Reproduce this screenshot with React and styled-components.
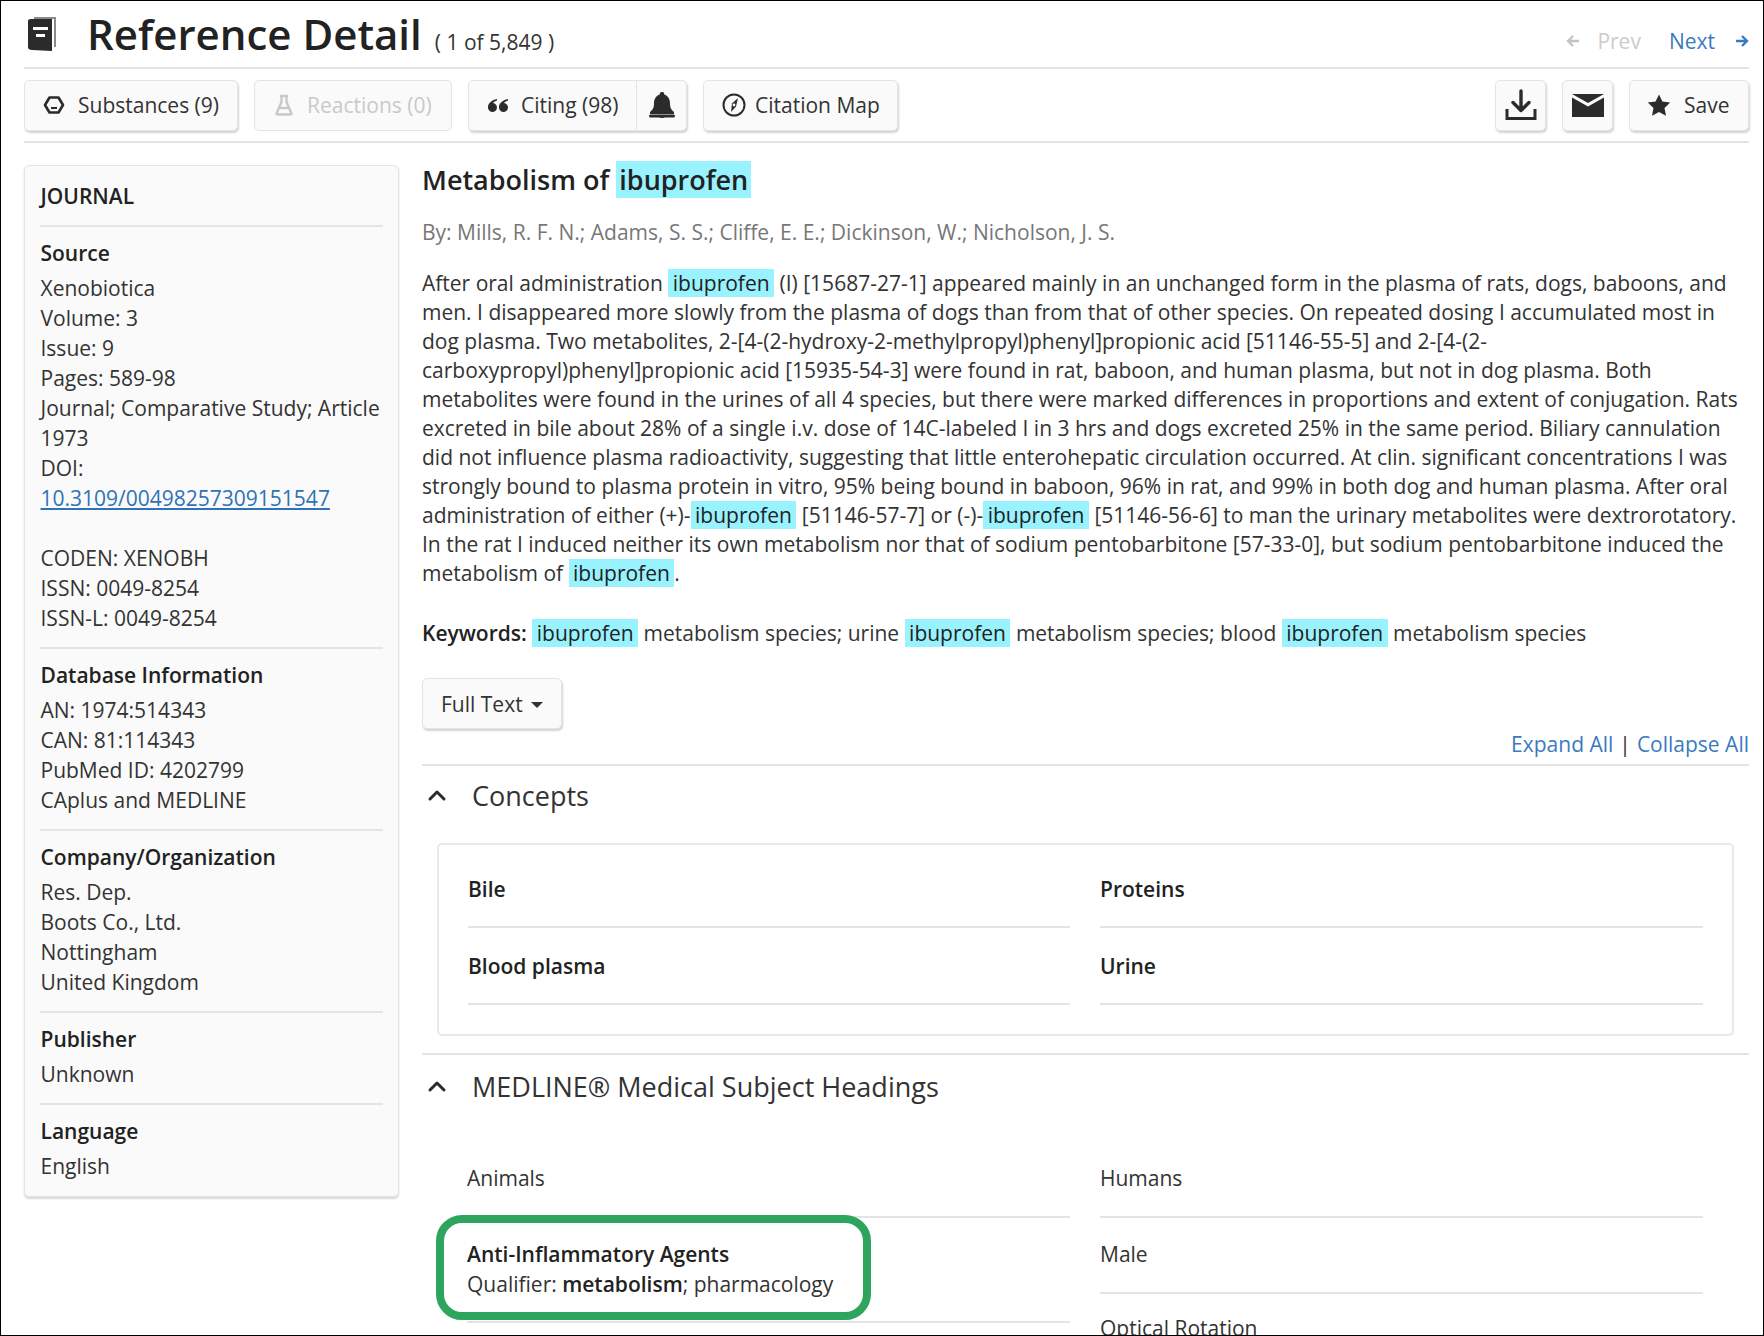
import React from 'react';
import styled, { createGlobalStyle } from 'styled-components';

const GlobalStyle = createGlobalStyle`
  html, body { margin: 0; padding: 0; background: #fff; overflow: hidden; }
  body { font-family: "Open Sans", "Liberation Sans", sans-serif; color: #2b2b2b; }
`;

const Frame = styled.div`
  box-sizing: border-box;
  width: 1764px;
  height: 1336px;
  border: 1px solid #000;
  overflow: hidden;
  padding: 0 14px 0 23px;
`;

const TitleRow = styled.header`
  height: 68px;
  box-sizing: border-box;
  display: flex;
  align-items: center;
  border-bottom: 2px solid #e4e4e4;
`;

const BookIcon = styled.svg`
  width: 34px;
  height: 36px;
  margin: 0 26px 0 3px;
  flex: none;
`;

const PageTitle = styled.h1`
  margin: 0;
  font-size: 42px;
  font-weight: 600;
  line-height: 54px;
  color: #222;
`;

const Counter = styled.span`
  margin: 16px 0 0 13px;
  font-size: 21px;
  color: #333;
`;

const Pager = styled.nav`
  margin-left: auto;
  display: flex;
  align-items: center;
  font-size: 21px;
  margin-top: 14px;
`;

const PagerLink = styled.a`
  display: flex;
  align-items: center;
  color: ${p => (p.$off ? '#ccc' : '#3a7abf')};
  gap: ${p => p.$gap}px;
  margin-left: ${p => p.$left || 0}px;
  svg { width: 14px; height: 14px; }
`;

const Toolbar = styled.div`
  height: 74px;
  box-sizing: border-box;
  display: flex;
  align-items: flex-start;
  padding-top: 11px;
  gap: 16px;
  border-bottom: 2px solid #e4e4e4;
`;

const ToolBtn = styled.button`
  box-sizing: border-box;
  height: 51px;
  padding: 0 0 2px;
  width: ${p => p.$w}px;
  display: flex;
  align-items: center;
  justify-content: ${p => (p.$center ? 'center' : 'flex-start')};
  padding-left: ${p => p.$pad || 0}px;
  gap: ${p => p.$gap || 0}px;
  background: #fafafa;
  border: 1px solid #e4e4e4;
  border-radius: 5px;
  box-shadow: ${p => (p.$off ? 'none' : '1px 2px 2px #d4d4d4')};
  font-family: inherit;
  font-size: 21px;
  color: ${p => (p.$off ? '#c9c9c9' : '#333')};
  flex: none;
`;

const BtnGroup = styled.div`
  display: flex;
  flex: none;
  width: 219px;
  height: 51px;
  box-sizing: border-box;
  background: #fafafa;
  border: 1px solid #e4e4e4;
  border-radius: 5px;
  box-shadow: 1px 2px 2px #d4d4d4;
  font-size: 21px;
  color: #333;
`;

const GroupPart = styled.div`
  display: flex;
  align-items: center;
  box-sizing: border-box;
  width: ${p => p.$w}px;
  padding-left: ${p => p.$pad}px;
  padding-bottom: 2px;
  gap: ${p => p.$gap || 0}px;
  border-left: ${p => (p.$split ? '1px solid #e4e4e4' : 'none')};
`;

const Push = styled.div`
  flex: 1;
`;

const Columns = styled.div`
  display: flex;
  align-items: flex-start;
  gap: 23px;
  padding-top: 22px;
`;

const InfoCard = styled.aside`
  box-sizing: border-box;
  width: 375px;
  height: 1032px;
  flex: none;
  padding: 15px 15px 0 15px;
  background: #fafafa;
  border: 1px solid #e4e4e4;
  border-radius: 5px;
  box-shadow: 0 2px 2px #d8d8d8;
  font-size: 21px;
  line-height: 30px;
  color: #333;
`;

const CardTitle = styled.div`
  padding: 0 0 14px 0.5px;
  color: #222;
  font-weight: 600;
`;

const InfoSection = styled.section`
  border-top: 2px solid #e4e4e4;
  padding: 11px 0 14px 0.5px;
`;

const InfoHead = styled.div`
  font-weight: 600;
  margin-bottom: 5px;
  color: #222;
`;

const InfoLine = styled.div`
  margin-top: ${p => p.$gap || 0}px;
`;

const DoiLink = styled.a`
  color: #2f72b8;
  text-decoration: underline;
`;

const Main = styled.main`
  flex: 1;
  min-width: 0;
`;

const ArticleTitle = styled.h2`
  margin: -4px 0 0;
  font-size: 27px;
  font-weight: 600;
  line-height: 37px;
  color: #222;
`;

const Hit = styled.span`
  background: #99f3ff;
  padding: 0 ${p => (p.$big ? 3 : 4.5)}px;
  font-weight: ${p => (p.$big ? 600 : 500)};
  color: #222;
`;

const Authors = styled.div`
  margin-top: 20px;
  font-size: 21px;
  line-height: 29px;
  color: #777;
`;

const Abstract = styled.p`
  margin: 22px 0 0;
  font-size: 21px;
  line-height: 29px;
  color: #333;
`;

const Keywords = styled.div`
  margin-top: 31px;
  font-size: 21px;
  line-height: 29px;
  color: #333;
  b { font-weight: 600; color: #222; }
`;

const FullTextBtn = styled(ToolBtn)`
  margin-top: 30px;
  width: 140px;
  gap: 8px;
  padding-left: 18px;
  padding-bottom: 0;
`;

const Caret = styled.i`
  width: 0;
  height: 0;
  border-left: 6px solid transparent;
  border-right: 6px solid transparent;
  border-top: 6px solid #333;
  margin-top: 3px;
`;

const ExpandRow = styled.div`
  display: flex;
  justify-content: flex-end;
  gap: 6px;
  font-size: 21px;
  line-height: 28px;
  color: #333;
  margin-top: 1px;
  padding-bottom: 6px;
`;

const BlueLink = styled.a`
  color: #3a7abf;
`;

const Accordion = styled.section`
  border-top: 2px solid #e4e4e4;
`;

const AccordionHead = styled.div`
  height: ${p => p.$h}px;
  display: flex;
  align-items: center;
  gap: 24px;
  padding-left: 4px;
  font-size: 27px;
  color: #333;
  svg { width: 22px; height: 22px; flex: none; }
`;

const ConceptBox = styled.div`
  box-sizing: border-box;
  margin: 19px 15px 17px;
  height: 193px;
  padding: 6px 30px 0 29px;
  border: 2px solid #e9e9e9;
  border-radius: 5px;
  display: grid;
  grid-template-columns: 602px 603px;
  column-gap: 30px;
  grid-auto-rows: 77px;
  align-content: start;
`;

const ConceptCell = styled.div`
  border-bottom: 2px solid #e4e4e4;
  font-size: 21px;
  font-weight: 600;
  color: #222;
  line-height: 29px;
  padding-top: 24px;
  box-sizing: border-box;
`;

const MeshGrid = styled.div`
  display: grid;
  grid-template-columns: 603px 603px;
  column-gap: 30px;
  margin: 0 0 0 45px;
`;

const MeshColumn = styled.div`
  display: flex;
  flex-direction: column;
`;

const MeshItem = styled.div`
  position: relative;
  box-sizing: border-box;
  height: ${p => p.$h || 76}px;
  padding-top: ${p => p.$top || 23}px;
  border-bottom: 2px solid #e4e4e4;
  font-size: 21px;
  line-height: 30px;
  color: #333;
  b { font-weight: 600; color: #222; }
`;

const MeshName = styled.div`
  font-weight: 600;
  color: #222;
`;

const GreenRing = styled.div`
  position: absolute;
  left: -31px;
  top: -3px;
  width: 435px;
  height: 105px;
  box-sizing: border-box;
  border: 8px solid #2ea55c;
  border-radius: 26px;
  pointer-events: none;
`;

const ICON = '#2b2b2b';

const Chevron = () => (
  <svg viewBox="0 0 22 22" fill="none" stroke={ICON} strokeWidth="3" strokeLinecap="round" strokeLinejoin="round">
    <path d="M4 15 L11 8 L18 15" />
  </svg>
);

const App = () => (
  <>
    <GlobalStyle />
    <Frame>
      <TitleRow>
        <BookIcon viewBox="0 0 34 36">
          <path d="M7 1 L29 1 L29 31 L27 31 L27 3 L7 3 Z" fill="#8a8a8a" />
          <path d="M1 5 Q1 3 4 3 L25 3 L25 35 L5 34 Q1 34 1 31 Z" fill={ICON} />
          <path d="M6 11 H21 V14 H6 Z M9 18 H18 V21 H9 Z" fill="#fff" />
        </BookIcon>
        <PageTitle>Reference Detail</PageTitle>
        <Counter>( 1 of 5,849 )</Counter>
        <Pager>
          <PagerLink $off $gap={17}>
            <svg viewBox="0 0 14 14" fill="none" stroke="#c4c4c4" strokeWidth="2.4"><path d="M13 7H2M7 2L2 7l5 5" /></svg>
            Prev
          </PagerLink>
          <PagerLink $gap={20} $left={28}>
            Next
            <svg viewBox="0 0 14 14" fill="none" stroke="#3a7abf" strokeWidth="2.4"><path d="M1 7h11M7 2l5 5-5 5" /></svg>
          </PagerLink>
        </Pager>
      </TitleRow>

      <Toolbar>
        <ToolBtn $w={214} $pad={18} $gap={13}>
          <svg width="22" height="20" viewBox="0 0 22 20" fill="none">
            <path d="M6.5 2.5 H15.5 L20 10 L15.500 17.500 H6.500 L2 10 Z" stroke={ICON} strokeWidth="2.6" strokeLinejoin="round" />
            <path d="M8 13 H14" stroke={ICON} strokeWidth="2" />
          </svg>
          Substances (9)
        </ToolBtn>
        <ToolBtn $w={198} $off $pad={19} $gap={13}>
          <svg width="20" height="22" viewBox="0 0 20 22" fill="none" stroke="#c9c9c9" strokeWidth="2.4" strokeLinejoin="round">
            <path d="M6 2 H14 M7.5 2 V8 L2.500 19.500 Q2.500 20.500 4 20.500 H16 Q17.500 20.500 17.500 19.500 L12.500 8 V2" />
            <path d="M5 14 H15" />
          </svg>
          Reactions (0)
        </ToolBtn>
        <BtnGroup>
          <GroupPart $w={167} $pad={18} $gap={12}>
            <svg width="22" height="14" viewBox="0 0 22 14" fill={ICON}>
              <path d="M10 1 C5 2 1 5 1 9 a4.500 4.500 0 1 0 5 -4 C7 3.500 8.500 3 10 2.500 Z" />
              <path d="M21 1 C16 2 12 5 12 9 a4.500 4.500 0 1 0 5 -4 C18 3.500 19.500 3 21 2.500 Z" />
            </svg>
            Citing (98)
          </GroupPart>
          <GroupPart $w={50} $split $pad={11}>
            <svg width="28" height="28" viewBox="0 0 28 28" fill={ICON}>
              <path d="M14 1 a2.200 2.200 0 0 1 2.200 2.400 C20 4.500 22 8 22 12 C22 16.500 23 18.500 26 21 V23 H2 V21 C5 18.500 6 16.500 6 12 C6 8 8 4.500 11.800 3.400 A2.200 2.200 0 0 1 14 1 Z" />
              <path d="M10.500 24 a3.500 3 0 0 0 7 0 Z" />
              <rect x="1" y="23.500" width="26" height="3" rx="1.500" />
            </svg>
          </GroupPart>
        </BtnGroup>
        <ToolBtn $w={195} $pad={18} $gap={9}>
          <svg width="24" height="24" viewBox="0 0 24 24" fill="none">
            <circle cx="12" cy="12" r="10.500" stroke={ICON} strokeWidth="2" />
            <path d="M16 5 L14 13.500 L9 19 L10 10.500 Z" fill={ICON} />
            <circle cx="12" cy="12" r="1.400" fill="#fafafa" />
          </svg>
          Citation Map
        </ToolBtn>
        <Push />
        <ToolBtn $w={51} $center>
          <svg width="32" height="32" viewBox="0 0 32 32" fill="none" stroke={ICON} strokeWidth="3.400">
            <path d="M16 2 V21 M8 13.500 L16 21.500 L24 13.500" strokeLinecap="round" strokeLinejoin="round" />
            <path d="M2 20 V29.500 H30 V20" strokeWidth="3" />
          </svg>
        </ToolBtn>
        <ToolBtn $w={51} $center>
          <svg width="32" height="24" viewBox="0 0 32 24" fill={ICON}>
            <path d="M0 1 H32 L16 10 Z" />
            <path d="M0 4.500 L16 13.500 L32 4.500 V24 H0 Z" />
          </svg>
        </ToolBtn>
        <ToolBtn $w={120} $pad={17} $gap={13}>
          <svg width="24" height="22" viewBox="0 0 24 22" fill={ICON}>
            <path d="M12 0.500 L15.400 7.600 L23.200 8.600 L17.500 14 L19 21.700 L12 18 L5 21.700 L6.500 14 L0.800 8.600 L8.600 7.600 Z" />
          </svg>
          Save
        </ToolBtn>
      </Toolbar>

      <Columns>
        <InfoCard>
          <CardTitle>JOURNAL</CardTitle>
          <InfoSection>
            <InfoHead>Source</InfoHead>
            <InfoLine>Xenobiotica</InfoLine>
            <InfoLine>Volume: 3</InfoLine>
            <InfoLine>Issue: 9</InfoLine>
            <InfoLine>Pages: 589-98</InfoLine>
            <InfoLine>Journal; Comparative Study; Article</InfoLine>
            <InfoLine>1973</InfoLine>
            <InfoLine>DOI:</InfoLine>
            <InfoLine><DoiLink>10.3109/00498257309151547</DoiLink></InfoLine>
            <InfoLine $gap={30}>CODEN: XENOBH</InfoLine>
            <InfoLine>ISSN: 0049-8254</InfoLine>
            <InfoLine>ISSN-L: 0049-8254</InfoLine>
          </InfoSection>
          <InfoSection>
            <InfoHead>Database Information</InfoHead>
            <InfoLine>AN: 1974:514343</InfoLine>
            <InfoLine>CAN: 81:114343</InfoLine>
            <InfoLine>PubMed ID: 4202799</InfoLine>
            <InfoLine>CAplus and MEDLINE</InfoLine>
          </InfoSection>
          <InfoSection>
            <InfoHead>Company/Organization</InfoHead>
            <InfoLine>Res. Dep.</InfoLine>
            <InfoLine>Boots Co., Ltd.</InfoLine>
            <InfoLine>Nottingham</InfoLine>
            <InfoLine>United Kingdom</InfoLine>
          </InfoSection>
          <InfoSection>
            <InfoHead>Publisher</InfoHead>
            <InfoLine>Unknown</InfoLine>
          </InfoSection>
          <InfoSection>
            <InfoHead>Language</InfoHead>
            <InfoLine>English</InfoLine>
          </InfoSection>
        </InfoCard>

        <Main>
          <ArticleTitle>Metabolism of <Hit $big>ibuprofen</Hit></ArticleTitle>
          <Authors>By: Mills, R. F. N.; Adams, S. S.; Cliffe, E. E.; Dickinson, W.; Nicholson, J. S.</Authors>
          <Abstract>
            After oral administration <Hit>ibuprofen</Hit> (I) [15687-27-1] appeared mainly in an unchanged form in the plasma of rats, dogs, baboons, and men. I disappeared more slowly from the plasma of dogs than from that of other species. On repeated dosing I accumulated most in dog plasma. Two metabolites, 2-[4-(2-hydroxy-2-methylpropyl)phenyl]propionic acid [51146-55-5] and 2-[4-(2-carboxypropyl)phenyl]propionic acid [15935-54-3] were found in rat, baboon, and human plasma, but not in dog plasma. Both metabolites were found in the urines of all 4 species, but there were marked differences in proportions and extent of conjugation. Rats excreted in bile about 28% of a single i.v. dose of 14C-labeled I in 3 hrs and dogs excreted 25% in the same period. Biliary cannulation did not influence plasma radioactivity, suggesting that little enterohepatic circulation occurred. At clin. significant concentrations I was strongly bound to plasma protein in vitro, 95% being bound in baboon, 96% in rat, and 99% in both dog and human plasma. After oral administration of either (+)-<Hit>ibuprofen</Hit> [51146-57-7] or (-)-<Hit>ibuprofen</Hit> [51146-56-6] to man the urinary metabolites were dextrorotatory. In the rat I induced neither its own metabolism nor that of sodium pentobarbitone [57-33-0], but sodium pentobarbitone induced the metabolism of <Hit>ibuprofen</Hit>.
          </Abstract>
          <Keywords>
            <b>Keywords:</b> <Hit>ibuprofen</Hit> metabolism species; urine <Hit>ibuprofen</Hit> metabolism species; blood <Hit>ibuprofen</Hit> metabolism species
          </Keywords>
          <FullTextBtn>Full Text <Caret /></FullTextBtn>
          <ExpandRow>
            <BlueLink>Expand All</BlueLink>|<BlueLink>Collapse All</BlueLink>
          </ExpandRow>

          <Accordion>
            <AccordionHead $h={58}><Chevron />Concepts</AccordionHead>
            <ConceptBox>
              <ConceptCell>Bile</ConceptCell>
              <ConceptCell>Proteins</ConceptCell>
              <ConceptCell>Blood plasma</ConceptCell>
              <ConceptCell>Urine</ConceptCell>
            </ConceptBox>
          </Accordion>
          <Accordion>
            <AccordionHead $h={62}><Chevron />MEDLINE® Medical Subject Headings</AccordionHead>
            <MeshGrid>
              <MeshColumn>
                <MeshItem $h={101} $top={46}>Animals</MeshItem>
                <MeshItem $h={105} $top={21}>
                  <GreenRing />
                  <MeshName>Anti-Inflammatory Agents</MeshName>
                  Qualifier: <b>metabolism</b>; pharmacology
                </MeshItem>
              </MeshColumn>
              <MeshColumn>
                <MeshItem $h={101} $top={46}>Humans</MeshItem>
                <MeshItem $h={76} $top={21}>Male</MeshItem>
                <MeshItem $h={76} $top={19}>Optical Rotation</MeshItem>
              </MeshColumn>
            </MeshGrid>
          </Accordion>
        </Main>
      </Columns>
    </Frame>
  </>
);

export default App;
